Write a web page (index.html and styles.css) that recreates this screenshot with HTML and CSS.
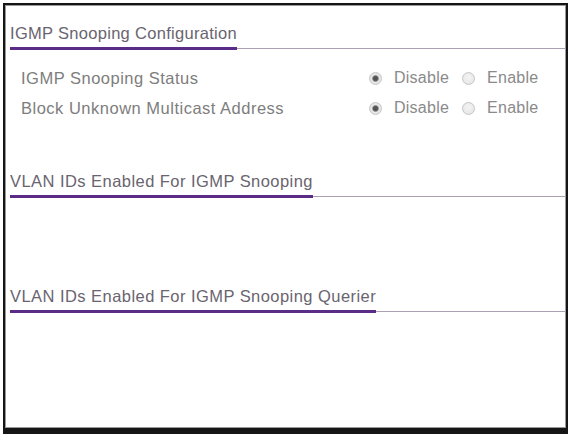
FILE: index.html
```html
<!DOCTYPE html>
<html>
<head>
<meta charset="utf-8">
<title>IGMP Snooping Configuration</title>
<link rel="stylesheet" href="styles.css">
</head>
<body>
<div class="panel">
  <div class="section sec-config">
    <div class="sec-head"><span class="sec-title">IGMP Snooping Configuration</span></div>
    <div class="sec-body">
      <div class="row">
        <div class="row-label">IGMP Snooping Status</div>
        <div class="options">
          <label class="opt"><input type="radio" name="status" checked><span>Disable</span></label>
          <label class="opt opt-second"><input type="radio" name="status"><span>Enable</span></label>
        </div>
      </div>
      <div class="row">
        <div class="row-label">Block Unknown Multicast Address</div>
        <div class="options">
          <label class="opt"><input type="radio" name="block" checked><span>Disable</span></label>
          <label class="opt opt-second"><input type="radio" name="block"><span>Enable</span></label>
        </div>
      </div>
    </div>
  </div>
  <div class="section sec-vlan">
    <div class="sec-head"><span class="sec-title">VLAN IDs Enabled For IGMP Snooping</span></div>
    <div class="sec-body empty"></div>
  </div>
  <div class="section sec-querier">
    <div class="sec-head"><span class="sec-title">VLAN IDs Enabled For IGMP Snooping Querier</span></div>
    <div class="sec-body"></div>
  </div>
</div>
</body>
</html>
```
FILE: styles.css
```css
html, body {
  margin: 0;
  padding: 0;
  background: #ffffff;
}
body {
  font-family: "Liberation Sans", Arial, sans-serif;
  width: 573px;
  height: 434px;
  overflow: hidden;
}
.panel {
  box-sizing: border-box;
  margin: 3px 0 0 3px;
  width: 565px;
  height: 431px;
  border: 2px solid #151515;
  border-bottom-width: 6px;
  box-shadow: inset 1px 1px 0 #9a9a9a, inset -1px -1px 0 #9a9a9a;
  background: #fff;
}
.sec-head {
  display: flex;
  margin-left: 5px;
  border-bottom: 1px solid #a9a0b2;
}
.sec-title {
  font-size: 16.5px;
  line-height: 18px;
  letter-spacing: 0.45px;
  color: #69646f;
  padding-bottom: 5px;
  border-bottom: 3px solid #5a2c88;
  margin-bottom: -2px;
  white-space: nowrap;
}
.sec-config .sec-title {
  letter-spacing: 0.3px;
}
.sec-config .sec-head {
  margin-top: 19px;
}
.sec-config .sec-body {
  padding-top: 14px;
}
.sec-vlan .sec-head {
  margin-top: 49px;
}
.sec-vlan .sec-body {
  height: 90px;
}
.row {
  display: flex;
  align-items: center;
  height: 30px;
  padding-left: 16px;
  font-size: 16.5px;
  line-height: 30px;
  letter-spacing: 0.5px;
  color: #7d7d7d;
}
.row-label {
  width: 348px;
  white-space: nowrap;
}
.options {
  display: flex;
  align-items: center;
  font-size: 16px;
  color: #8a8a8a;
  letter-spacing: 0.25px;
}
.opt {
  display: flex;
  align-items: center;
}
.opt-second {
  margin-left: 13px;
}
.opt input {
  -webkit-appearance: none;
  appearance: none;
  box-sizing: border-box;
  width: 13px;
  height: 13px;
  margin: 0 12px 0 0;
  border-radius: 50%;
  border: 1px solid #c6c6c6;
  background: radial-gradient(circle at 50% 40%, #f4f4f4 0, #e2e2e2 100%);
}
.opt input:checked {
  background: radial-gradient(circle, #4f4f4f 0, #5a5a5a 2.2px, #9a9a9a 3px, #e8e8e8 3.8px, #dedede 100%);
}
```
